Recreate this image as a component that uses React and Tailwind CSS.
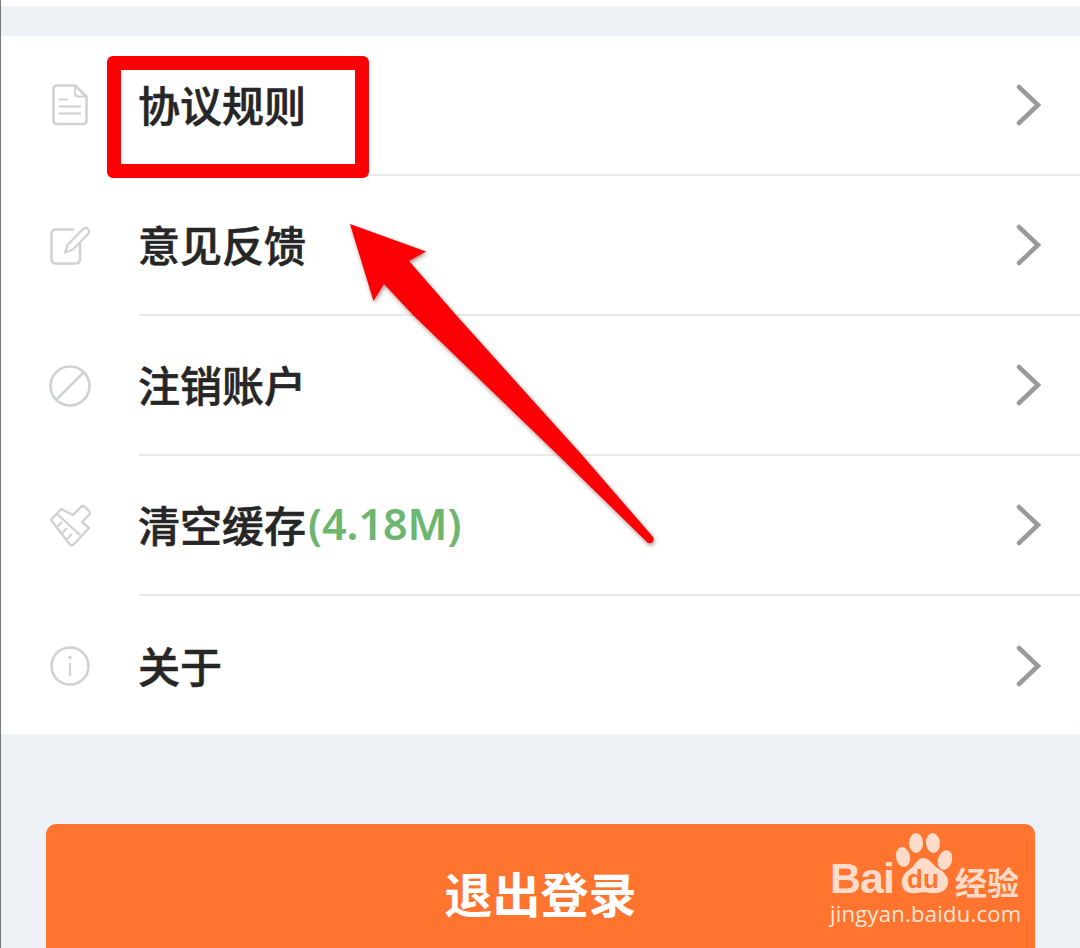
import React from "react";

const Chevron = () => (
  <svg width="26" height="42" viewBox="0 0 26 42" fill="none" className="shrink-0">
    <path d="M3 3 L22 21 L3 39" stroke="#9a9a9a" strokeWidth="4.5" strokeLinecap="round" strokeLinejoin="miter" />
  </svg>
);

const iconProps = { width: 44, height: 44, viewBox: "0 0 44 44", fill: "none", stroke: "#d0d1d5", strokeWidth: 2.6 };

const DocIcon = () => (
  <svg {...iconProps} strokeLinejoin="round">
    <path d="M5.500 5 Q5.500 1.500 9 1.500 H27 L38.500 12.500 V36.500 Q38.500 40 35 40 H9 Q5.500 40 5.500 36.500 Z" />
    <path d="M27 1.500 V9 Q27 12.500 30.500 12.500 H38.500" strokeWidth="2" />
    <path d="M10.500 15.500 H20 M10.500 22.500 H33 M10.500 29.500 H33" strokeWidth="2" />
  </svg>
);

const EditIcon = () => (
  <svg {...iconProps} strokeLinecap="round" strokeLinejoin="round">
    <path d="M25 5.500 H8 Q3.500 5.500 3.500 10 V35 Q3.500 39.500 8 39.500 H27.500 Q32 39.500 32 35 V19" />
    <path d="M17 28.500 L20 20.500 L35 5 Q38 3 40 5 Q42 8 40 10 L25 25.500 Z" strokeWidth="2.200" />
  </svg>
);

const BanIcon = () => (
  <svg {...iconProps}>
    <circle cx="22" cy="22" r="19.500" />
    <path d="M9 35 L35 9" />
  </svg>
);

const BroomIcon = () => (
  <svg {...iconProps} strokeLinejoin="round" strokeWidth="2.400">
    <path d="M3 16 L13 5 L25 11 L33 3 Q35 1 37 3 L41 7 Q43 9 41 11 L34 18 L41 24 L25 41 Q23.500 42 22 40.500 Z" />
    <path d="M9 10 L32 31 M9 23 L14 18 M14 29 L19 24 M19 35 L24 30" strokeWidth="2.200" />
  </svg>
);

const InfoIcon = () => (
  <svg {...iconProps}>
    <circle cx="22" cy="22" r="18.500" />
    <circle cx="22" cy="13.500" r="1.700" fill="#d0d1d5" stroke="none" />
    <path d="M22 19 V32" strokeWidth="2" />
  </svg>
);

const Row = ({ icon, label, extra, last }) => (
  <div className="flex h-[140px]">
    <div className="w-[138px] shrink-0 pl-[47px] flex items-center">{icon}</div>
    <div className={`flex-1 flex items-center justify-between pr-[38px] ${last ? "" : "border-b-2 border-[#e9e9e9]"}`}>
      <div className="flex items-center text-[42px] font-medium [-webkit-text-stroke:0.6px_#262626] text-[#262626] leading-none pb-[3px] -ml-px">
        {label}
        {extra && <span className="ml-[2px] text-[43px] font-semibold [-webkit-text-stroke:0] text-[#6cb670] font-['Noto_Sans',sans-serif]">{extra}</span>}
      </div>
      <Chevron />
    </div>
  </div>
);

const ARROW = "M349 224 L425 251.500 L408 261 L455 315 L581 455 L652 537 Q654 541 650 543 Q647 544 645 541 L557 455 L412 315 L383 284 L372.500 301 Z";

const Arrow = () => (
  <svg
    width="1080"
    height="948"
    viewBox="0 0 1080 948"
    className="absolute inset-0 pointer-events-none drop-shadow-[1px_2px_2px_rgba(110,40,40,0.55)]"
  >
    <path d={ARROW} fill="#fd0005" />
  </svg>
);

const Watermark = () => (
  <div className="absolute left-[829px] top-[832px] flex flex-col text-[#ffdcc9]">
    <div className="flex items-end h-[65px]">
      <div className="w-[64px] -mb-[3px] text-[43px] leading-[43px] tracking-[-1px] font-bold font-['Liberation_Sans',sans-serif]">Bai</div>
      <div className="relative w-[58px] h-[65px]">
        <svg width="58" height="65" viewBox="0 0 58 65" fill="#ffdcc9">
          <ellipse cx="22" cy="11" rx="7" ry="10" />
          <ellipse cx="39" cy="11" rx="7" ry="10" transform="rotate(-6 39 11)" />
          <ellipse cx="9" cy="25" rx="7" ry="10" transform="rotate(-12 9 25)" />
          <ellipse cx="51" cy="28" rx="7" ry="10" transform="rotate(18 51 28)" />
          <path d="M29 26 C36 26 38 33 45 37 C52 41 55 47 54 52 C52 60 44 62 36 61 C32 60 27 60 23 61 C15 62 9 60 8 52 C7 46 10 41 16 37 C22 33 23 26 29 26 Z" />
        </svg>
        <div className="absolute inset-x-0 bottom-[2px] text-center text-[26px] leading-[32px] font-bold text-[#ff742e] font-['Liberation_Sans',sans-serif]">du</div>
      </div>
      <div className="ml-[3px] -mb-[1px] text-[32px] leading-[34px] font-bold">经验</div>
    </div>
    <div className="mt-[5px] text-[22px] leading-[22px] tracking-[0.25px] font-['Open_Sans',sans-serif] text-[#ffe6d9]">jingyan.baidu.com</div>
  </div>
);

export default function App() {
  return (
    <div className="relative w-[1080px] h-[948px] overflow-hidden bg-[#eef1f5] border-l border-[#777] font-['Noto_Sans_CJK_SC',sans-serif]">
      <div className="h-[6px] bg-white" />
      <div className="h-[30px]" />
      <div className="bg-white h-[698px]">
        <Row icon={<DocIcon />} label="协议规则" />
        <Row icon={<EditIcon />} label="意见反馈" />
        <Row icon={<BanIcon />} label="注销账户" />
        <Row icon={<BroomIcon />} label="清空缓存" extra="(4.18M)" />
        <Row icon={<InfoIcon />} label="关于" last />
      </div>
      <div className="mt-[90px] ml-[45px] w-[989px] h-[160px] rounded-[10px] bg-[#ff742e] flex justify-center pt-[39px] text-white text-[48px] font-bold leading-[58px]">
        退出登录
      </div>

      {/* annotations on top of the screenshot */}
      <div className="absolute left-[106px] top-[56px] w-[262px] h-[122px] border-[14px] border-[#fd0005] rounded-[6px]" />
      <Arrow />
      <Watermark />
    </div>
  );
}
